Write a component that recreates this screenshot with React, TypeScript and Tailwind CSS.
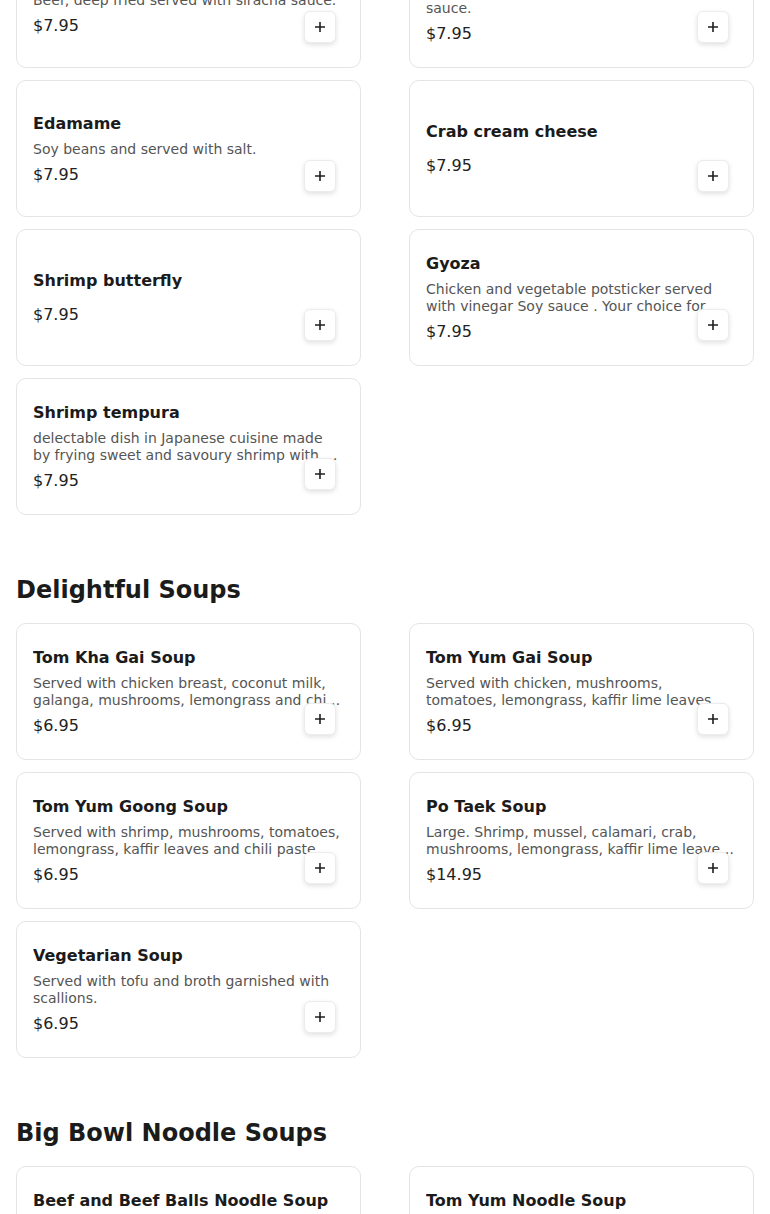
import React from "react";

type Item = { name: string; desc?: string; price: string };

const appetizers: Item[] = [
  { name: "Crispy Beef", desc: "Beef, deep fried served with siracha sauce.", price: "$7.95" },
  { name: "Chicken Wings", desc: "Deep fried chicken wings with sweet chili sauce.", price: "$7.95" },
  { name: "Edamame", desc: "Soy beans and served with salt.", price: "$7.95" },
  { name: "Crab cream cheese", price: "$7.95" },
  { name: "Shrimp butterfly", price: "$7.95" },
  {
    name: "Gyoza",
    desc: "Chicken and vegetable potsticker served with vinegar Soy sauce . Your choice for fried or steamed.",
    price: "$7.95",
  },
  {
    name: "Shrimp tempura",
    desc: "delectable dish in Japanese cuisine made by frying sweet and savoury shrimp with a light batter.",
    price: "$7.95",
  },
];

const soups: Item[] = [
  {
    name: "Tom Kha Gai Soup",
    desc: "Served with chicken breast, coconut milk, galanga, mushrooms, lemongrass and chili paste.",
    price: "$6.95",
  },
  {
    name: "Tom Yum Gai Soup",
    desc: "Served with chicken, mushrooms, tomatoes, lemongrass, kaffir lime leaves and chili paste.",
    price: "$6.95",
  },
  {
    name: "Tom Yum Goong Soup",
    desc: "Served with shrimp, mushrooms, tomatoes, lemongrass, kaffir leaves and chili paste and lime juice.",
    price: "$6.95",
  },
  {
    name: "Po Taek Soup",
    desc: "Large. Shrimp, mussel, calamari, crab, mushrooms, lemongrass, kaffir lime leaves and basil.",
    price: "$14.95",
  },
  {
    name: "Vegetarian Soup",
    desc: "Served with tofu and broth garnished with scallions.",
    price: "$6.95",
  },
];

const noodles: Item[] = [
  {
    name: "Beef and Beef Balls Noodle Soup",
    desc: "Rice noodles with sliced beef, beef balls, bean sprouts and cilantro in beef broth.",
    price: "$12.95",
  },
  {
    name: "Tom Yum Noodle Soup",
    desc: "Rice noodles with shrimp, ground pork, bean sprouts and peanuts in spicy tom yum broth.",
    price: "$12.95",
  },
];

function PlusIcon() {
  return (
    <svg width="12" height="12" viewBox="0 0 12 12" fill="none">
      <path d="M6 1v10M1 6h10" stroke="#1f1f1f" strokeWidth="1.6" />
    </svg>
  );
}

function Card({ item }: { item: Item }) {
  return (
    <div className="relative h-[137px] rounded-[10px] border border-[#e4e4e4] bg-white px-4 flex flex-col justify-center">
      <div className="text-base leading-[19px] font-bold text-[#1b1b1b] mb-2 truncate">{item.name}</div>
      {item.desc && (
        <div className="text-sm leading-[17px] text-[#555555] line-clamp-2">{item.desc}</div>
      )}
      <div className="text-base leading-[19px] text-[#222222] mt-[7px]">{item.price}</div>
      <button className="absolute right-6 bottom-6 w-8 h-8 flex items-center justify-center rounded-md bg-white border border-[#ececec] shadow-[0_2px_5px_rgba(0,0,0,0.12)]">
        <PlusIcon />
      </button>
    </div>
  );
}

function Grid({ items, className = "" }: { items: Item[]; className?: string }) {
  return (
    <div className={"grid grid-cols-2 gap-x-12 gap-y-3 " + className}>
      {items.map((it) => (
        <Card key={it.name} item={it} />
      ))}
    </div>
  );
}

function Heading({ children }: { children: React.ReactNode }) {
  return (
    <h2 className="pt-[59px] pb-[17px] text-2xl leading-8 font-bold text-[#1b1b1b]">{children}</h2>
  );
}

export default function App() {
  return (
    <div
      className="bg-white px-4 h-[1214px] overflow-hidden"
      style={{ fontFamily: '"DejaVu Sans", sans-serif' }}
    >
      <Grid items={appetizers} className="-mt-[69px]" />
      <Heading>Delightful Soups</Heading>
      <Grid items={soups} />
      <Heading>Big Bowl Noodle Soups</Heading>
      <Grid items={noodles} />
    </div>
  );
}
